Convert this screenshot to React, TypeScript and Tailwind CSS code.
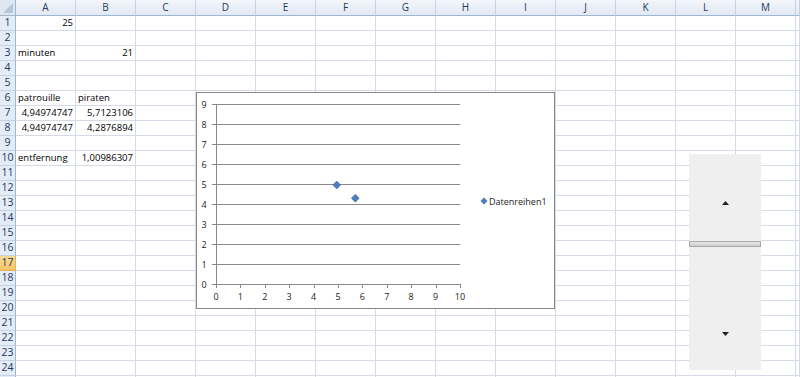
import React from "react";

const COLS = ["A", "B", "C", "D", "E", "F", "G", "H", "I", "J", "K", "L", "M", ""];
const ROWS = Array.from({ length: 25 }, (_, i) => i + 1);

type Cell = { t: string; r?: boolean };
const DATA: Record<string, Cell> = {
  "1-0": { t: "25", r: true },
  "3-0": { t: "minuten" },
  "3-1": { t: "21", r: true },
  "6-0": { t: "patrouille" },
  "6-1": { t: "piraten" },
  "7-0": { t: "4,94974747", r: true },
  "7-1": { t: "5,7123106", r: true },
  "8-0": { t: "4,94974747", r: true },
  "8-1": { t: "4,2876894", r: true },
  "10-0": { t: "entfernung" },
  "10-1": { t: "1,00986307", r: true },
};

function Chart() {
  const x0 = 19;
  const unit = 24.4;
  const yOf = (v: number) => 191 - v * 20;
  const xOf = (v: number) => x0 + v * unit;
  const pts = [
    [4.95, 4.95],
    [5.71, 4.29],
  ];
  return (
    <div className="absolute left-[196px] top-[92px] h-[217px] w-[359px] border border-[#878787] bg-white">
      <svg width="357" height="215" className="block" style={{ fontFamily: "'Open Sans', sans-serif" }}>
        {Array.from({ length: 10 }, (_, i) => (
          <g key={i}>
            <line x1={x0 - 4} x2={263} y1={yOf(i) + 0.5} y2={yOf(i) + 0.5} stroke="#8a8a8a" strokeWidth="1" />
            <text x={7} y={yOf(i) + 3.5} fontSize="9" textAnchor="middle" fill="#222">
              {i}
            </text>
          </g>
        ))}
        <line x1={x0 + 0.5} x2={x0 + 0.5} y1={yOf(9)} y2={yOf(0) + 1} stroke="#8a8a8a" />
        {Array.from({ length: 11 }, (_, i) => (
          <g key={i}>
            <line x1={Math.round(xOf(i)) + 0.5} x2={Math.round(xOf(i)) + 0.5} y1={yOf(0)} y2={yOf(0) + 4} stroke="#8a8a8a" />
            <text x={xOf(i)} y={207} fontSize="9" textAnchor="middle" fill="#222">
              {i}
            </text>
          </g>
        ))}
        {pts.map(([x, y], i) => (
          <polygon
            key={i}
            points={`${xOf(x)},${yOf(y) - 4} ${xOf(x) + 4},${yOf(y)} ${xOf(x)},${yOf(y) + 4} ${xOf(x) - 4},${yOf(y)}`}
            fill="#4a7ebb"
            stroke="#3b6aa3"
            strokeWidth="0.5"
          />
        ))}
        <polygon points="287,104.5 290.5,108 287,111.5 283.5,108" fill="#4a7ebb" />
        <text x={292} y={111.5} fontSize="9" fill="#222">
          Datenreihen1
        </text>
      </svg>
    </div>
  );
}

function Spinner() {
  return (
    <div className="absolute left-[689px] top-[154px] flex h-[216px] w-[72px] flex-col bg-[#efefef]">
      <div className="flex h-[87px] items-end justify-center pb-[36px]">
        <svg width="7" height="4" viewBox="0 0 7 4">
          <polygon points="3.5,0 7,4 0,4" fill="#222" />
        </svg>
      </div>
      <div className="h-[6px] w-full border border-[#a8a8a8] bg-gradient-to-b from-[#e6e6e6] to-[#cfcfcf]" />
      <div className="flex flex-1 items-start justify-center pt-[85px]">
        <svg width="7" height="4" viewBox="0 0 7 4">
          <polygon points="0,0 7,0 3.5,4" fill="#222" />
        </svg>
      </div>
    </div>
  );
}

export default function App() {
  return (
    <div
      className="relative h-[377px] w-[800px] overflow-hidden bg-white text-[9.5px] text-black"
      style={{ fontFamily: "'Open Sans', 'Liberation Sans', sans-serif" }}
    >
      <div className="grid grid-cols-[16px_repeat(13,60px)_1fr] grid-rows-[16px_repeat(25,15px)]">
        <div className="relative box-border border-b border-r border-[#9eb6ce] bg-[#dfe7f2]">
          <svg width="10" height="10" className="absolute bottom-[2px] right-[2px]">
            <polygon points="10,0 10,10 0,10" fill="#b7c8dd" />
          </svg>
        </div>
        {COLS.map((c, i) => (
          <div
            key={c + i}
            className="box-border flex items-center justify-center border-b border-r border-b-[#9eb6ce] border-r-[#c5d2e3] bg-gradient-to-b from-[#f3f6fb] to-[#e1e9f4] text-[10px] text-[#1e395b]"
          >
            {c}
          </div>
        ))}
        {ROWS.map((r) => (
          <React.Fragment key={r}>
            <div
              className={
                r === 17
                  ? "box-border flex items-center justify-center border-b border-r border-b-[#e2b35f] border-r-[#e2b35f] bg-gradient-to-b from-[#fbdc92] to-[#f3c467] text-[10.5px] text-[#1e395b]"
                  : "box-border flex items-center justify-center border-b border-r border-b-[#c5d2e3] border-r-[#9eb6ce] bg-[#e4ecf7] text-[10.5px] text-[#1e395b]"
              }
            >
              {r <= 24 ? r : ""}
            </div>
            {COLS.map((_, ci) => {
              const d = DATA[`${r}-${ci}`];
              return (
                <div
                  key={ci}
                  className={
                    d && d.r
                      ? "box-border flex items-center justify-end overflow-visible whitespace-nowrap border-b border-r border-[#d4dbe7] pr-[2px]"
                      : "box-border flex items-center justify-start overflow-visible whitespace-nowrap border-b border-r border-[#d4dbe7] pl-[2px]"
                  }
                >
                  {d ? d.t : null}
                </div>
              );
            })}
          </React.Fragment>
        ))}
      </div>
      <Chart />
      <Spinner />
    </div>
  );
}
